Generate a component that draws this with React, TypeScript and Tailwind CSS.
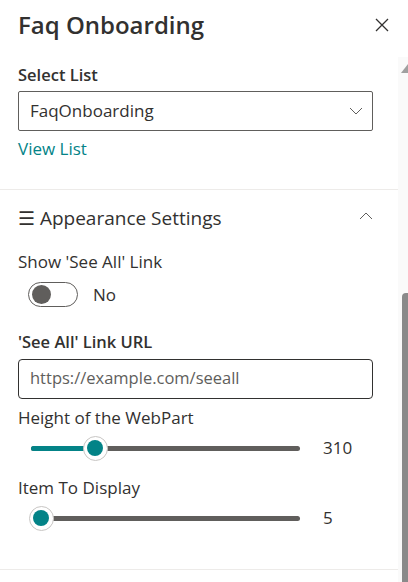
import React from "react";

function Slider({ center, value }: { center: number; value: string }) {
  // center is the thumb centre measured from the track start
  return (
    <div className="flex items-center h-[24px] pl-[31px]">
      <div className="relative w-[269px] h-[24px]">
        <div className="absolute left-0 right-0 top-[10px] h-[5px] rounded-full bg-[#605e5c]" />
        <div className="absolute left-0 top-[10px] h-[5px] rounded-full bg-[#038387]" style={{ width: center }} />
        <div
          className="absolute top-0 w-[25px] h-[25px] rounded-full bg-white border border-[#c8c6c4] flex items-center justify-center"
          style={{ left: center - 12.5 }}
        >
          <div className="w-[16px] h-[16px] rounded-full bg-[#038387]" />
        </div>
      </div>
      <span className="ml-[23px] text-[17px]">{value}</span>
    </div>
  );
}

export default function App() {
  return (
    <div className="flex w-[408px] h-[582px] overflow-hidden bg-white text-[#323130] font-['Segoe_UI','Open_Sans',sans-serif]">
      <div className="w-[398px] flex flex-col">
        {/* header */}
        <div className="flex items-center justify-between h-[50px] pl-[18px] pr-[9px]">
          <h1 className="text-[24px] font-semibold leading-[36px]">Faq Onboarding</h1>
          <svg width="14" height="14" viewBox="0 0 14 14">
            <path d="M1 1 L13 13 M13 1 L1 13" stroke="#323130" strokeWidth="1.3" fill="none" />
          </svg>
        </div>

        <div className="pl-[18px] pr-[25px] flex flex-col">
          <p className="mt-[12px] text-[16.5px] font-semibold leading-[26px]">Select List</p>
          <div className="mt-[3px] h-[40px] border border-[#605e5c] rounded-[2px] flex items-center justify-between pl-[11px] pr-[9px]">
            <span className="text-[17px]">FaqOnboarding</span>
            <svg width="14" height="8" viewBox="0 0 14 8">
              <path d="M1 1 L7 7 L13 1" stroke="#605e5c" strokeWidth="1" fill="none" />
            </svg>
          </div>
          <p className="mt-[6px] text-[17px] leading-[24px] text-[#038387]">View List</p>
        </div>

        <div className="mt-[28px] h-[1px] bg-[#edebe9]" />

        <div className="pl-[18px] pr-[25px] flex flex-col">
          <div className="mt-[10px] h-[36px] flex items-center justify-between">
            <span className="text-[19px]">☰ Appearance Settings</span>
            <svg width="14" height="8" viewBox="0 0 14 8" className="mb-[4px]">
              <path d="M1 7 L7 1 L13 7" stroke="#605e5c" strokeWidth="1" fill="none" />
            </svg>
          </div>

          <p className="mt-[14px] text-[17px] leading-[24px]">Show 'See All' Link</p>
          <div className="mt-[8px] flex items-center pl-[10px]">
            <div className="w-[50px] h-[25px] rounded-full border border-[#605e5c] flex items-center pl-[3px]">
              <div className="w-[19px] h-[19px] rounded-full bg-[#605e5c]" />
            </div>
            <span className="ml-[15px] text-[17px]">No</span>
          </div>

          <p className="mt-[22px] text-[16.5px] font-semibold leading-[24px]">'See All' Link URL</p>
          <div className="mt-[5px] h-[40px] border border-[#323130] rounded-[4px] flex items-center pl-[11px]">
            <span className="text-[16.5px] text-[#605e5c]">https://example.com/seeall</span>
          </div>

          <p className="mt-[7px] text-[17px] leading-[24px]">Height of the WebPart</p>
        </div>
        <div className="mt-[6px]">
          <Slider center={64} value="310" />
        </div>
        <p className="mt-[16px] px-[18px] text-[17px] leading-[24px]">Item To Display</p>
        <div className="mt-[6px]">
          <Slider center={10} value="5" />
        </div>

        <div className="mt-[39px] h-[1px] bg-[#edebe9]" />
      </div>

      {/* scrollbar */}
      <div className="w-[10px] mt-[57px] bg-[#fafafa] flex flex-col items-end">
        <svg width="7" height="9" viewBox="0 0 7 9" className="mt-[7px]">
          <path d="M7 0 L7 9 L0 9 Z" fill="#a0a0a0" />
        </svg>
        <div className="mt-[220px] w-[6px] flex-1 bg-[#8a8a8a] rounded-tl-[4px]" />
      </div>
    </div>
  );
}
